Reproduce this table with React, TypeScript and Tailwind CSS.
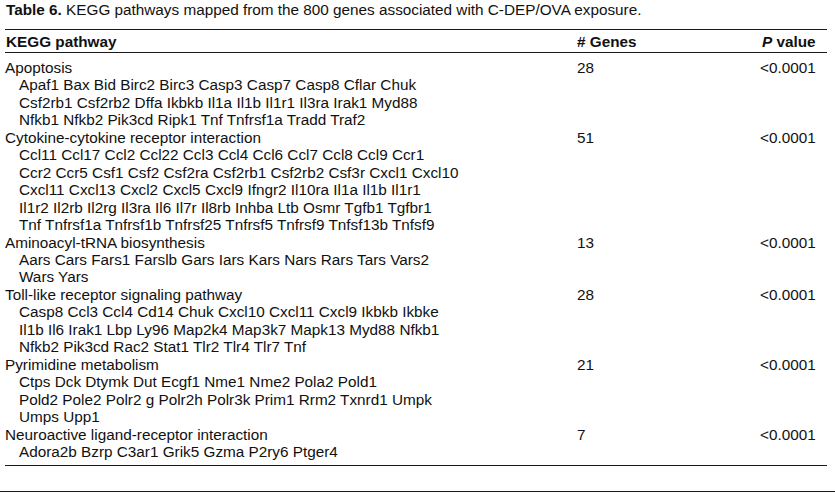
const rows = [
  {
    name: 'Apoptosis',
    count: 28,
    genes: [
      'Apaf1 Bax Bid Birc2 Birc3 Casp3 Casp7 Casp8 Cflar Chuk',
      'Csf2rb1 Csf2rb2 Dffa Ikbkb Il1a Il1b Il1r1 Il3ra Irak1 Myd88',
      'Nfkb1 Nfkb2 Pik3cd Ripk1 Tnf Tnfrsf1a Tradd Traf2',
    ],
  },
  {
    name: 'Cytokine-cytokine receptor interaction',
    count: 51,
    genes: [
      'Ccl11 Ccl17 Ccl2 Ccl22 Ccl3 Ccl4 Ccl6 Ccl7 Ccl8 Ccl9 Ccr1',
      'Ccr2 Ccr5 Csf1 Csf2 Csf2ra Csf2rb1 Csf2rb2 Csf3r Cxcl1 Cxcl10',
      'Cxcl11 Cxcl13 Cxcl2 Cxcl5 Cxcl9 Ifngr2 Il10ra Il1a Il1b Il1r1',
      'Il1r2 Il2rb Il2rg Il3ra Il6 Il7r Il8rb Inhba Ltb Osmr Tgfb1 Tgfbr1',
      'Tnf Tnfrsf1a Tnfrsf1b Tnfrsf25 Tnfrsf5 Tnfrsf9 Tnfsf13b Tnfsf9',
    ],
  },
  {
    name: 'Aminoacyl-tRNA biosynthesis',
    count: 13,
    genes: ['Aars Cars Fars1 Farslb Gars Iars Kars Nars Rars Tars Vars2', 'Wars Yars'],
  },
  {
    name: 'Toll-like receptor signaling pathway',
    count: 28,
    genes: [
      'Casp8 Ccl3 Ccl4 Cd14 Chuk Cxcl10 Cxcl11 Cxcl9 Ikbkb Ikbke',
      'Il1b Il6 Irak1 Lbp Ly96 Map2k4 Map3k7 Mapk13 Myd88 Nfkb1',
      'Nfkb2 Pik3cd Rac2 Stat1 Tlr2 Tlr4 Tlr7 Tnf',
    ],
  },
  {
    name: 'Pyrimidine metabolism',
    count: 21,
    genes: [
      'Ctps Dck Dtymk Dut Ecgf1 Nme1 Nme2 Pola2 Pold1',
      'Pold2 Pole2 Polr2 g Polr2h Polr3k Prim1 Rrm2 Txnrd1 Umpk',
      'Umps Upp1',
    ],
  },
  {
    name: 'Neuroactive ligand-receptor interaction',
    count: 7,
    genes: ['Adora2b Bzrp C3ar1 Grik5 Gzma P2ry6 Ptger4'],
  },
];

export default function App() {
  return (
    <div className="w-[835px] h-[496px] bg-white text-[#111] text-[15.3px] leading-[17.45px] font-['Liberation_Sans',Arial,sans-serif] overflow-hidden">
      {/* Caption */}
      <div className="h-[29px] pl-[6px] pt-[1px] whitespace-nowrap">
        <span className="font-bold">Table 6.</span> KEGG pathways mapped from the 800 genes associated with C-DEP/OVA exposure.
      </div>

      <div className="ml-[5px] w-[822px] border-t border-b border-[#1a1a1a]">
        {/* Header */}
        <div className="grid grid-cols-[572px_183px_1fr] border-b border-[#1a1a1a] h-[23px] pt-[3px] font-bold">
          <div className="pl-[1px]">KEGG pathway</div>
          <div>
            # Genes
          </div>
          <div className="pl-[2px]">
            <span className="italic">P</span> value
          </div>
        </div>

        {/* Body */}
        <div className="pt-[6px] pb-[4.5px]">
          {rows.map((row) => (
            <div key={row.name} className="grid grid-cols-[572px_183px_1fr]">
              <div className="whitespace-nowrap">
                <div>{row.name}</div>
                {row.genes.map((g) => (
                  <div key={g} className="pl-[14px]">
                    {g}
                  </div>
                ))}
              </div>
              <div>{row.count}</div>
              <div>&lt;0.0001</div>
            </div>
          ))}
        </div>
      </div>

      <div className="mt-[25px] border-t border-[#1a1a1a]" />
    </div>
  );
}
